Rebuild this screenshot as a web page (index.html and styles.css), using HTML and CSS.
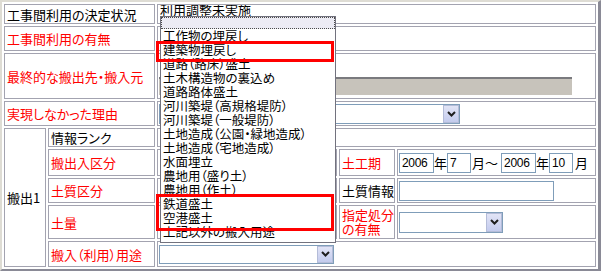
FILE: index.html
```html
<!DOCTYPE html>
<html lang="ja">
<head>
<meta charset="UTF-8" />
<title>工事間利用の入力</title>
<link rel="stylesheet" href="styles.css">
</head>
<body>
  <div class="sheet">
    <div class="grid">
      <!-- 決定状況 -->
      <div class="cell label wide">工事間利用の決定状況</div>
      <div class="cell value full status">
        <span class="status-text">利用調整未実施</span>
      </div>

      <div class="cell label wide req">工事間利用の有無</div>
      <div class="cell value full"></div>

      <div class="cell label wide req">最終的な搬出先・搬入元</div>
      <div class="cell value full to-bottom">
        <div class="locked-box"></div>
      </div>

      <div class="cell label wide req">実現しなかった理由</div>
      <div class="cell value full">
        <div class="select select-reason">
          <span class="arrow"><svg width="9" height="6" viewBox="0 0 9 6"><path d="M1 1 L4.5 4.5 L8 1" fill="none" stroke="#1e1e1e" stroke-width="2"/></svg></span>
        </div>
      </div>

      <!-- 搬出1 -->
      <div class="cell label group">搬出1</div>
      <div class="cell label">情報ランク</div>
      <div class="cell value full"></div>

      <div class="cell label req">搬出入区分</div>
      <div class="cell value"></div>
      <div class="cell label req">土工期</div>
      <div class="cell value dates">
        <input class="field year" type="text" value="2006">
        <span class="unit">年</span>
        <input class="field month" type="text" value="7">
        <span class="unit until">月～</span>
        <input class="field year" type="text" value="2006">
        <span class="unit">年</span>
        <input class="field month" type="text" value="10">
        <span class="unit last">月</span>
      </div>

      <div class="cell label req">土質区分</div>
      <div class="cell value"></div>
      <div class="cell label">土質情報</div>
      <div class="cell value">
        <input class="field soil" type="text" value="">
      </div>

      <div class="cell label req">土量</div>
      <div class="cell value"></div>
      <div class="cell label req two-line">指定処分<br>の有無</div>
      <div class="cell value">
        <div class="select select-disposal">
          <span class="arrow"><svg width="9" height="6" viewBox="0 0 9 6"><path d="M1 1 L4.5 4.5 L8 1" fill="none" stroke="#1e1e1e" stroke-width="2"/></svg></span>
        </div>
      </div>

      <div class="cell label req">搬入（利用）用途</div>
      <div class="cell value full">
        <div class="select select-use">
          <span class="arrow"><svg width="9" height="6" viewBox="0 0 9 6"><path d="M1 1 L4.5 4.5 L8 1" fill="none" stroke="#1e1e1e" stroke-width="2"/></svg></span>
        </div>
      </div>
    </div>

    <!-- Opened dropdown of 決定状況 -->
    <ul class="droplist">
      <li class="current"></li>
      <li>工作物の埋戻し</li>
      <li>建築物埋戻し</li>
      <li>道路（路床）盛土</li>
      <li>土木構造物の裏込め</li>
      <li>道路路体盛土</li>
      <li>河川築堤（高規格堤防）</li>
      <li>河川築堤（一般堤防）</li>
      <li>土地造成（公園・緑地造成）</li>
      <li>土地造成（宅地造成）</li>
      <li>水面埋立</li>
      <li>農地用（盛り土）</li>
      <li>農地用（作土）</li>
      <li>鉄道盛土</li>
      <li>空港盛土</li>
      <li>上記以外の搬入用途</li>
    </ul>

    <!-- Red highlight marks -->
    <div class="mark mark-building"></div>
    <div class="mark mark-rail"></div>
  </div>
</body>
</html>
```

FILE: styles.css
```css
/* --- Reset and basics --- */
* {
  box-sizing: border-box;
}
html, body {
  margin: 0;
  padding: 0;
  background: #fff;
}
body {
  font-family: "Noto Sans CJK JP", sans-serif;
  font-size: 13px;
  color: #000;
}

.sheet {
  position: relative;
  width: 601px;
  height: 271px;
}

/* --- Form table (border=1 cellspacing=2 look) --- */
.grid {
  display: grid;
  grid-template-columns: 42px 107px 180px 56px 199px;
  grid-template-rows: 20px 25px 46px 25px 19px 27px 25px 34px 26px;
  gap: 2px;
  padding: 2px;
  border-style: solid;
  border-width: 2px 3px 2px 2px;
  border-color: #dedcd4 #8a8a96 #8a8a96 #dedcd4;
  width: 601px;
  height: 271px;
}

.cell {
  display: flex;
  align-items: center;
  border: 1px solid #a3a3b0;
  padding: 0 2px;
  white-space: nowrap;
  overflow: hidden;
  background: #fff;
}

.label {
  line-height: 15px;
  font-feature-settings: "palt";
}
.req { color: #f00; }
.wide { grid-column: span 2; }
.full { grid-column: span 3; }
.group { grid-row: span 5; }
.two-line { line-height: 14px; }

.value { padding: 0 1px; }

/* --- 決定状況 (select opened) --- */
.status { align-items: flex-start; }
.status-text {
  line-height: 13px;
  margin-top: -2px;
  padding-left: 1px;
}

/* --- Disabled wide box --- */
.to-bottom { align-items: flex-end; padding-bottom: 3px; }
.locked-box {
  width: 413px;
  height: 18px;
  border-top: 2px solid #7a7a7e;
  background: #c7c3bb;
}

/* --- Select boxes --- */
.select {
  display: flex;
  justify-content: flex-end;
  border: 1px solid #7f9db9;
  background: #fff;
}
.select .arrow {
  display: flex;
  align-items: center;
  justify-content: center;
  width: 16px;
  border: 1px solid #b4bcd8;
  background: linear-gradient(#e2e4f6, #c3cbee);
}
.select-reason { width: 301px; height: 20px; }
.select-disposal { width: 104px; height: 21px; }
.select-use { width: 175px; height: 19px; }

/* --- Text fields --- */
.field {
  height: 20px;
  margin: 0;
  padding: 0 2px;
  border: 1px solid #7f9db9;
  font-family: "Liberation Sans", sans-serif;
  font-size: 12px;
  letter-spacing: -0.3px;
  color: #000;
  background: #fff;
}
.year { width: 35px; }
.month { width: 24px; }
.soil { width: 155px; }

.dates .unit { line-height: 15px; }
.dates .until { margin: 0 3px 0 1px; }
.dates .last { margin-left: 2px; }

/* --- Dropdown list --- */
.droplist {
  position: absolute;
  left: 160px;
  top: 16px;
  width: 176px;
  margin: 0;
  padding: 0 0 3px;
  list-style: none;
  border: 1px solid #72727e;
  background: #fff;
  font-size: 12.5px;
  line-height: 14px;
  font-feature-settings: "palt";
}
.droplist li {
  height: 14px;
  padding-left: 2px;
  white-space: nowrap;
}
.droplist .current {
  height: 12px;
  border: 1px dotted #4a4a4a;
  background: #ecebf4;
}

/* --- Red highlight marks --- */
.mark {
  position: absolute;
  left: 156px;
  width: 178px;
  border: 3px solid #f00;
}
.mark-building { top: 41px; height: 21px; }
.mark-rail { top: 194px; height: 37px; }
```
